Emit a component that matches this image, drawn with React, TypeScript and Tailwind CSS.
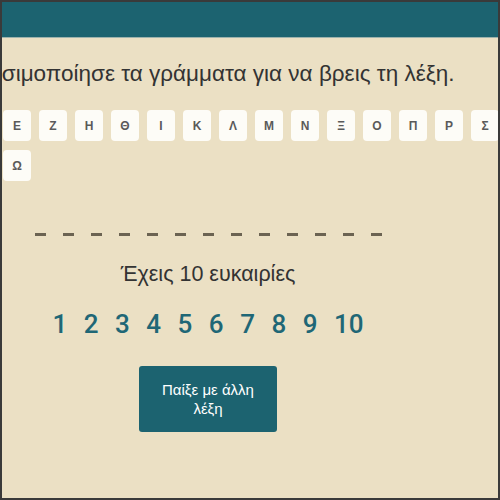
import React from 'react'

const letters = 'ΑΒΓΔΕΖΗΘΙΚΛΜΝΞΟΠΡΣΤΥΦΧΨΩ'.split('')

export default function App() {
  return (
    <div
      className="w-[500px] h-[500px] overflow-hidden border-2 border-[#3a3a3a] bg-[#ebe0c4]"
      style={{ fontFamily: '"Liberation Sans", Arial, sans-serif' }}
    >
      {/* header bar */}
      <div className="h-[36px] w-full bg-[#1c6370] border-b border-[#9db3ad]" />

      {/* page column, wider than the view and scrolled sideways */}
      <div className="w-[698px] ml-[-143px] flex flex-col items-center">
        <p className="mt-[21px] text-[22.5px] leading-[30px] text-[#333]">
          Χρησιμοποίησε τα γράμματα για να βρεις τη λέξη.
        </p>

        {/* letters */}
        <div className="mt-[21px] w-full flex flex-wrap gap-x-2 gap-y-[9px]">
          {letters.map((l) => (
            <button
              key={l}
              className="w-[28px] h-[31px] rounded-[4px] bg-[#fdfcf7] text-[12px] font-bold text-[#5a5a5a] flex items-center justify-center"
            >
              {l}
            </button>
          ))}
        </div>

        {/* hidden word */}
        <div className="mt-[52px] flex gap-[17px]">
          {Array.from({ length: 13 }).map((_, i) => (
            <span key={i} className="w-[11px] h-[3px] bg-[#6b6352]" />
          ))}
        </div>

        <p className="mt-[24px] text-[21.5px] leading-[28px] text-[#333]">Έχεις 10 ευκαιρίες</p>

        {/* tries */}
        <div
          className="mt-[21px] flex gap-[16.5px] text-[26px] leading-[30px] font-medium text-[#1f6776]"
          style={{ fontFamily: 'Roboto, "Liberation Sans", sans-serif' }}
        >
          {Array.from({ length: 10 }).map((_, i) => (
            <span key={i}>{i + 1}</span>
          ))}
        </div>

        <button className="mt-[27px] w-[138px] h-[66px] rounded-[3px] bg-[#1c6370] px-3 text-[15px] leading-[19px] text-white">
          Παίξε με άλλη λέξη
        </button>
      </div>
    </div>
  )
}
